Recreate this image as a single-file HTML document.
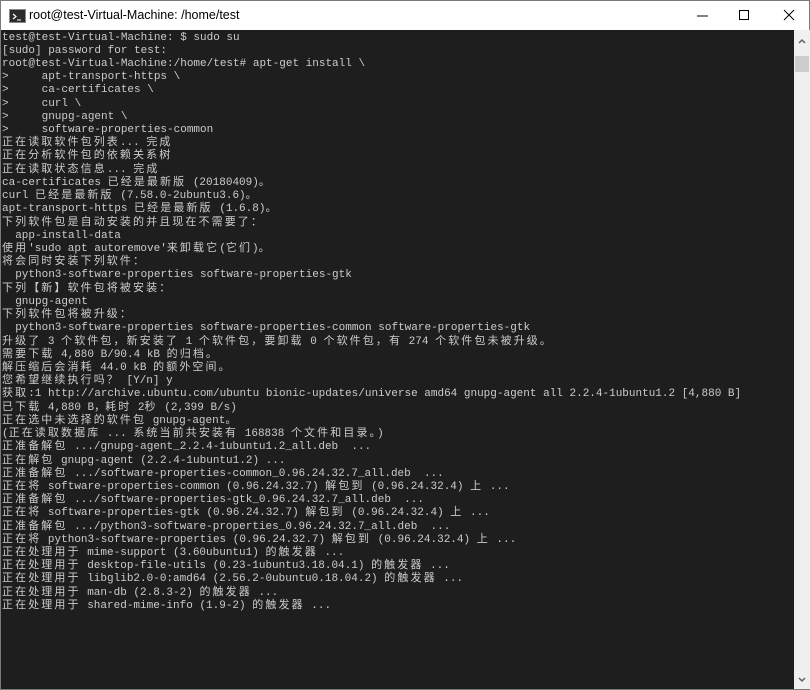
<!DOCTYPE html>
<html><head><meta charset="utf-8"><style>
*{margin:0;padding:0}
body{width:810px;height:690px;overflow:hidden;background:#1e1e1e;position:relative;font-family:"Liberation Sans",sans-serif}
#win{position:absolute;left:0;top:0;width:808px;height:688px;border:1px solid #7a7a7a;background:#1e1e1e}
#title{position:absolute;left:0;top:0;width:808px;height:29px;background:#fff}
#title .t{position:absolute;left:28px;top:7px;font-size:12.5px;color:#000}
#icon{position:absolute;left:8px;top:8px;width:15px;height:12px;background:#2b2b2b;border:1px solid #888}
#term{position:absolute;left:1px;top:29px;width:792px;height:659px;background:#1e1e1e;color:#cccccc;font-family:"Liberation Mono","Noto Sans CJK SC",monospace;font-size:11px;padding-top:1.5px;box-sizing:border-box}
#term div{height:13.22px;line-height:13.22px;white-space:pre}
#term span{letter-spacing:2.1px}
#sb{position:absolute;left:793px;top:29px;width:16px;height:659px;background:#f0f0f0}
#thumb{position:absolute;left:1px;top:26px;width:14px;height:16px;background:#cdcdcd}
</style></head><body>
<div id="win">
<div id="title"><div id="icon"><svg width="15" height="12"><path d="M3 3l3 2.5L3 8" stroke="#fff" fill="none" stroke-width="1.2"/><path d="M7 9h4" stroke="#fff"/></svg></div><div class="t">root@test-Virtual-Machine: /home/test</div>
<svg style="position:absolute;left:690px;top:6px" width="115" height="18"><path d="M6 9h11" stroke="#000"/><rect x="48.5" y="3.5" width="9" height="9" fill="none" stroke="#000"/><path d="M93 3l10 10M103 3l-10 10" stroke="#000"/></svg>
</div>
<div id="term">
<div>test@test-Virtual-Machine: $ sudo su</div>
<div>[sudo] password for test:</div>
<div>root@test-Virtual-Machine:/home/test# apt-get install \</div>
<div>&gt;     apt-transport-https \</div>
<div>&gt;     ca-certificates \</div>
<div>&gt;     curl \</div>
<div>&gt;     gnupg-agent \</div>
<div>&gt;     software-properties-common</div>
<div><span>正在读取软件包列表</span>... <span>完成</span></div>
<div><span>正在分析软件包的依赖关系树</span></div>
<div><span>正在读取状态信息</span>... <span>完成</span></div>
<div>ca-certificates <span>已经是最新版</span> (20180409)。</div>
<div>curl <span>已经是最新版</span> (7.58.0-2ubuntu3.6)。</div>
<div>apt-transport-https <span>已经是最新版</span> (1.6.8)。</div>
<div><span>下列软件包是自动安装的并且现在不需要了：</span></div>
<div>  app-install-data</div>
<div><span>使用</span>'sudo apt autoremove'<span>来卸载它</span>(<span>它们</span>)。</div>
<div><span>将会同时安装下列软件：</span></div>
<div>  python3-software-properties software-properties-gtk</div>
<div><span>下列【新】软件包将被安装：</span></div>
<div>  gnupg-agent</div>
<div><span>下列软件包将被升级：</span></div>
<div>  python3-software-properties software-properties-common software-properties-gtk</div>
<div><span>升级了</span> 3 <span>个软件包，新安装了</span> 1 <span>个软件包，要卸载</span> 0 <span>个软件包，有</span> 274 <span>个软件包未被升级。</span></div>
<div><span>需要下载</span> 4,880 B/90.4 kB <span>的归档。</span></div>
<div><span>解压缩后会消耗</span> 44.0 kB <span>的额外空间。</span></div>
<div><span>您希望继续执行吗？</span> [Y/n] y</div>
<div><span>获取</span>:1 http://archive.ubuntu.com/ubuntu bionic-updates/universe amd64 gnupg-agent all 2.2.4-1ubuntu1.2 [4,880 B]</div>
<div><span>已下载</span> 4,880 B，<span>耗时</span> 2<span>秒</span> (2,399 B/s)</div>
<div><span>正在选中未选择的软件包</span> gnupg-agent。</div>
<div>(<span>正在读取数据库</span> ... <span>系统当前共安装有</span> 168838 <span>个文件和目录。</span>)</div>
<div><span>正准备解包</span> .../gnupg-agent_2.2.4-1ubuntu1.2_all.deb  ...</div>
<div><span>正在解包</span> gnupg-agent (2.2.4-1ubuntu1.2) ...</div>
<div><span>正准备解包</span> .../software-properties-common_0.96.24.32.7_all.deb  ...</div>
<div><span>正在将</span> software-properties-common (0.96.24.32.7) <span>解包到</span> (0.96.24.32.4) <span>上</span> ...</div>
<div><span>正准备解包</span> .../software-properties-gtk_0.96.24.32.7_all.deb  ...</div>
<div><span>正在将</span> software-properties-gtk (0.96.24.32.7) <span>解包到</span> (0.96.24.32.4) <span>上</span> ...</div>
<div><span>正准备解包</span> .../python3-software-properties_0.96.24.32.7_all.deb  ...</div>
<div><span>正在将</span> python3-software-properties (0.96.24.32.7) <span>解包到</span> (0.96.24.32.4) <span>上</span> ...</div>
<div><span>正在处理用于</span> mime-support (3.60ubuntu1) <span>的触发器</span> ...</div>
<div><span>正在处理用于</span> desktop-file-utils (0.23-1ubuntu3.18.04.1) <span>的触发器</span> ...</div>
<div><span>正在处理用于</span> libglib2.0-0:amd64 (2.56.2-0ubuntu0.18.04.2) <span>的触发器</span> ...</div>
<div><span>正在处理用于</span> man-db (2.8.3-2) <span>的触发器</span> ...</div>
<div><span>正在处理用于</span> shared-mime-info (1.9-2) <span>的触发器</span> ...</div>
</div>
<div id="sb"><svg style="position:absolute;left:4px;top:8px" width="8" height="6"><path d="M1 5l3-3 3 3" stroke="#606060" stroke-width="1.5" fill="none"/></svg><div id="thumb"></div><svg style="position:absolute;left:4px;top:647px" width="8" height="6"><path d="M1 1l3 3 3-3" stroke="#606060" stroke-width="1.5" fill="none"/></svg></div>
</div>
</body></html>
